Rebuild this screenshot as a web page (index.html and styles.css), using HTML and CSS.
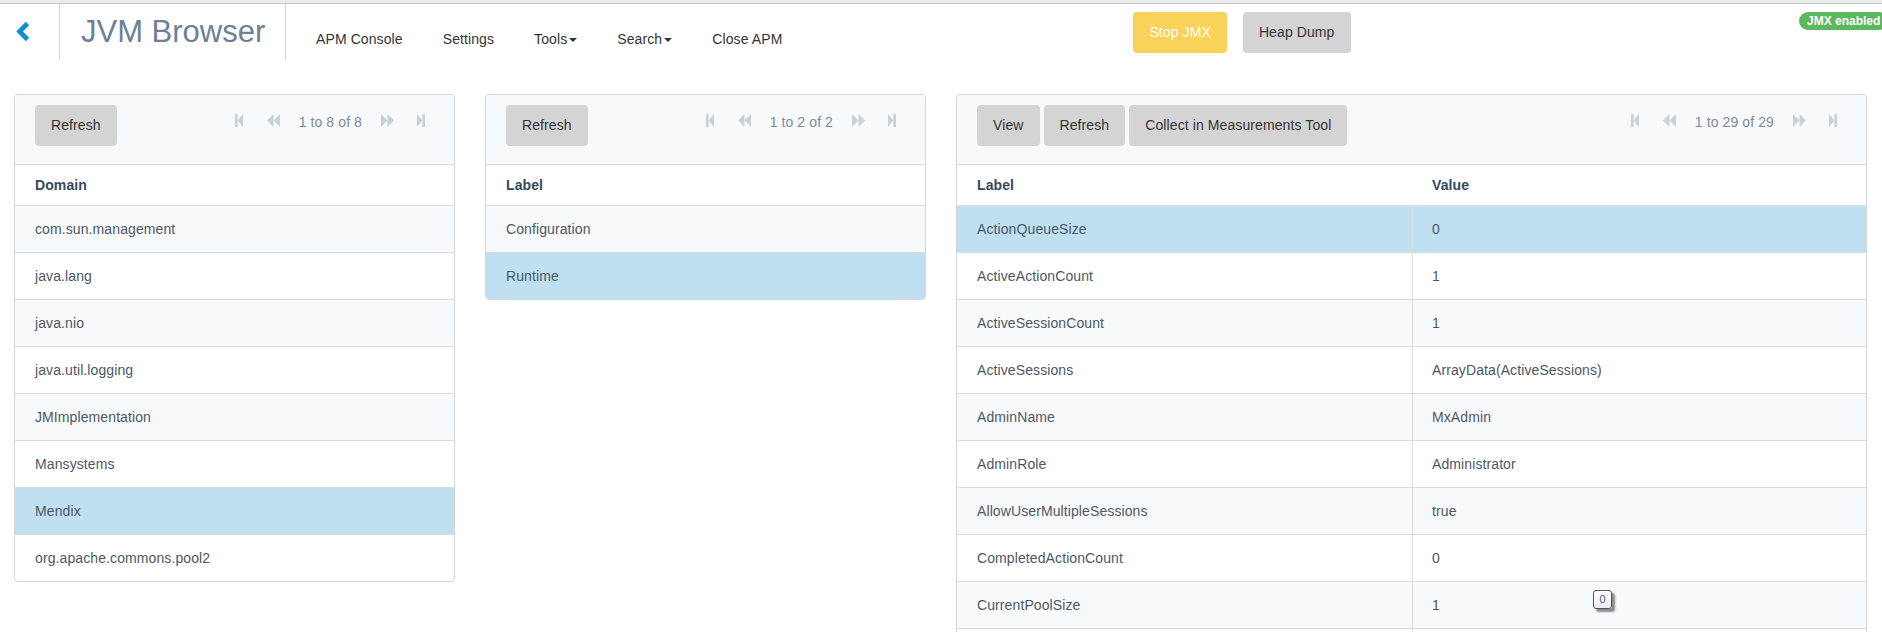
FILE: index.html
```html
<!DOCTYPE html>
<html lang="en">
<head>
<meta charset="utf-8">
<title>JVM Browser</title>
<link rel="stylesheet" href="styles.css">
</head>
<body>
<div class="topline"></div>
<header class="appbar">
  <a class="back" href="#"><svg width="16" height="21" viewBox="0 0 16 21"><polyline points="12.5,2.5 4.5,10.5 12.5,18.5" fill="none" stroke="#0b8fdb" stroke-width="4.6"/></svg></a>
  <div class="brand">JVM Browser</div>
  <nav class="nav">
    <a href="#">APM Console</a>
    <a href="#">Settings</a>
    <a href="#">Tools<span class="caret"></span></a>
    <a href="#">Search<span class="caret"></span></a>
    <a href="#">Close APM</a>
  </nav>
  <div class="actions">
    <button class="btn btn-warn">Stop JMX</button>
    <button class="btn">Heap Dump</button>
  </div>
  <span class="badge">JMX enabled</span>
</header>

<main class="panels">
  <section class="panel">
    <div class="toolbar">
      <div class="btn-group"><button class="btn">Refresh</button></div>
      <div class="pager">
        <svg class="pg-first" width="8" height="13" viewBox="0 0 8 13"><rect width="2.6" height="13"/><polygon points="8,0 8,13 2.6,6.5"/></svg>
        <svg class="pg-prev" width="13" height="13" viewBox="0 0 13 13"><polygon points="6.5,0 6.5,13 0,6.5"/><polygon points="13,0 13,13 6.5,6.5"/></svg>
        <span class="pg-text">1 to 8 of 8</span>
        <svg class="pg-next" width="13" height="13" viewBox="0 0 13 13"><polygon points="0,0 0,13 6.5,6.5"/><polygon points="6.5,0 6.5,13 13,6.5"/></svg>
        <svg class="pg-last" width="8" height="13" viewBox="0 0 8 13"><polygon points="0,0 0,13 5.4,6.5"/><rect x="5.4" width="2.6" height="13"/></svg>
      </div>
    </div>
    <div class="thead">Domain</div>
    <div class="tbody">
      <div class="row">com.sun.management</div>
      <div class="row">java.lang</div>
      <div class="row">java.nio</div>
      <div class="row">java.util.logging</div>
      <div class="row">JMImplementation</div>
      <div class="row">Mansystems</div>
      <div class="row sel">Mendix</div>
      <div class="row">org.apache.commons.pool2</div>
    </div>
  </section>

  <section class="panel">
    <div class="toolbar">
      <div class="btn-group"><button class="btn">Refresh</button></div>
      <div class="pager">
        <svg class="pg-first" width="8" height="13" viewBox="0 0 8 13"><rect width="2.6" height="13"/><polygon points="8,0 8,13 2.6,6.5"/></svg>
        <svg class="pg-prev" width="13" height="13" viewBox="0 0 13 13"><polygon points="6.5,0 6.5,13 0,6.5"/><polygon points="13,0 13,13 6.5,6.5"/></svg>
        <span class="pg-text">1 to 2 of 2</span>
        <svg class="pg-next" width="13" height="13" viewBox="0 0 13 13"><polygon points="0,0 0,13 6.5,6.5"/><polygon points="6.5,0 6.5,13 13,6.5"/></svg>
        <svg class="pg-last" width="8" height="13" viewBox="0 0 8 13"><polygon points="0,0 0,13 5.4,6.5"/><rect x="5.4" width="2.6" height="13"/></svg>
      </div>
    </div>
    <div class="thead">Label</div>
    <div class="tbody">
      <div class="row">Configuration</div>
      <div class="row sel">Runtime</div>
    </div>
  </section>

  <section class="panel">
    <div class="toolbar">
      <div class="btn-group">
        <button class="btn">View</button>
        <button class="btn">Refresh</button>
        <button class="btn">Collect in Measurements Tool</button>
      </div>
      <div class="pager">
        <svg class="pg-first" width="8" height="13" viewBox="0 0 8 13"><rect width="2.6" height="13"/><polygon points="8,0 8,13 2.6,6.5"/></svg>
        <svg class="pg-prev" width="13" height="13" viewBox="0 0 13 13"><polygon points="6.5,0 6.5,13 0,6.5"/><polygon points="13,0 13,13 6.5,6.5"/></svg>
        <span class="pg-text">1 to 29 of 29</span>
        <svg class="pg-next" width="13" height="13" viewBox="0 0 13 13"><polygon points="0,0 0,13 6.5,6.5"/><polygon points="6.5,0 6.5,13 13,6.5"/></svg>
        <svg class="pg-last" width="8" height="13" viewBox="0 0 8 13"><polygon points="0,0 0,13 5.4,6.5"/><rect x="5.4" width="2.6" height="13"/></svg>
      </div>
    </div>
    <div class="thead two"><span class="cell">Label</span><span class="cell">Value</span></div>
    <div class="tbody">
      <div class="row two sel"><span class="cell">ActionQueueSize</span><span class="cell">0</span></div>
      <div class="row two"><span class="cell">ActiveActionCount</span><span class="cell">1</span></div>
      <div class="row two"><span class="cell">ActiveSessionCount</span><span class="cell">1</span></div>
      <div class="row two"><span class="cell">ActiveSessions</span><span class="cell">ArrayData(ActiveSessions)</span></div>
      <div class="row two"><span class="cell">AdminName</span><span class="cell">MxAdmin</span></div>
      <div class="row two"><span class="cell">AdminRole</span><span class="cell">Administrator</span></div>
      <div class="row two"><span class="cell">AllowUserMultipleSessions</span><span class="cell">true</span></div>
      <div class="row two"><span class="cell">CompletedActionCount</span><span class="cell">0</span></div>
      <div class="row two"><span class="cell">CurrentPoolSize</span><span class="cell">1</span></div>
      <div class="row two"><span class="cell">&nbsp;</span><span class="cell">&nbsp;</span></div>
    </div>
  </section>
</main>
<div class="tip">0</div>
</body>
</html>
```

FILE: styles.css
```css
html, body {
  margin: 0;
  padding: 0;
  overflow: hidden;
  background: #fff;
}
body {
  font-family: "Liberation Sans", Arial, sans-serif;
  font-size: 14px;
  letter-spacing: 0.1px;
  color: #333;
  position: relative;
  height: 632px;
}
button {
  font-family: inherit;
  letter-spacing: inherit;
}
.topline {
  height: 3px;
  background: #ececec;
  border-bottom: 1px solid #c4c4c4;
}
.appbar {
  position: relative;
  display: flex;
  align-items: flex-start;
  height: 56px;
}
.back {
  box-sizing: border-box;
  width: 60px;
  height: 56px;
  padding: 17px 0 0 15px;
  border-right: 1px solid #d6d6d6;
  display: block;
}
.back svg {
  display: block;
}
.brand {
  box-sizing: border-box;
  width: 226px;
  height: 56px;
  padding: 12px 0 0 21px;
  border-right: 1px solid #d6d6d6;
  font-size: 31px;
  line-height: 31px;
  letter-spacing: 0;
  color: #6d8096;
  white-space: nowrap;
}
.nav {
  display: flex;
  margin-left: 10px;
  padding-top: 25px;
}
.nav a {
  padding: 0 20px;
  line-height: 20px;
  color: #333;
  text-decoration: none;
  white-space: nowrap;
}
.caret {
  display: inline-block;
  width: 0;
  height: 0;
  margin-left: 2px;
  vertical-align: middle;
  border-top: 4px solid #333;
  border-left: 4px solid transparent;
  border-right: 4px solid transparent;
}
.actions {
  display: flex;
  gap: 16px;
  margin-left: 331px;
  margin-top: 8px;
}
.btn {
  height: 41px;
  padding: 0 16px;
  border: 0;
  border-radius: 4px;
  background: #d4d4d4;
  color: #333;
  font-size: 14px;
  line-height: 41px;
  white-space: nowrap;
}
.btn-warn {
  background: #f9d25a;
  color: #fff;
}
.badge {
  position: absolute;
  top: 8px;
  left: 1799px;
  height: 18px;
  line-height: 18px;
  padding: 0 8px;
  border-radius: 9px;
  background: #5cb85c;
  color: #fff;
  font-size: 12px;
  font-weight: bold;
  letter-spacing: 0;
  white-space: nowrap;
}
.panels {
  display: grid;
  grid-template-columns: 441px 441px 911px;
  column-gap: 30px;
  align-items: start;
  margin-top: 34px;
  padding-left: 14px;
}
.panel {
  border: 1px solid #d6d6d6;
  border-radius: 4px;
  overflow: hidden;
  background: #fff;
}
.toolbar {
  display: flex;
  justify-content: space-between;
  align-items: flex-start;
  padding: 10px 29px 18px 20px;
  background: #f8f9fa;
  border-bottom: 1px solid #dcdcdc;
}
.btn-group {
  display: flex;
  gap: 4px;
}
.pager {
  display: flex;
  align-items: flex-start;
  margin-top: 7px;
  line-height: 20px;
  color: #7f8c9d;
}
.pager svg {
  display: block;
  margin-top: 2px;
  fill: #c9d0d8;
}
.pg-first { margin-right: 24px; }
.pg-prev { margin-right: 19px; }
.pg-next { margin-left: 19px; }
.pg-last { margin-left: 23px; }
.thead {
  height: 40px;
  line-height: 40px;
  padding-left: 20px;
  font-weight: bold;
  color: #34495e;
  border-bottom: 1px solid #dcdcdc;
}
.row {
  height: 46px;
  line-height: 46px;
  padding-left: 20px;
  color: #4d5865;
  border-bottom: 1px solid #dcdcdc;
  white-space: nowrap;
}
.row:last-child {
  border-bottom: 0;
}
.tbody .row:nth-child(odd) {
  background: #f8f9fa;
}
.tbody .row.sel {
  background: #bee0f1;
}
.two {
  display: grid;
  grid-template-columns: 455px 1fr;
  padding-left: 0;
}
.two .cell {
  padding-left: 20px;
}
.two .cell + .cell {
  padding-left: 19px;
  border-left: 1px solid #dcdcdc;
}
.thead.two .cell + .cell {
  border-left-color: transparent;
}
.tip {
  position: absolute;
  left: 1593px;
  top: 590px;
  box-sizing: border-box;
  width: 19px;
  height: 19px;
  border: 1px solid #555;
  border-radius: 3px;
  background: linear-gradient(#ffffff, #ececec);
  box-shadow: 3px 3px 2px rgba(0, 0, 0, 0.45);
  font-size: 11px;
  line-height: 17px;
  letter-spacing: 0;
  text-align: center;
  color: #3d5a99;
}
```
